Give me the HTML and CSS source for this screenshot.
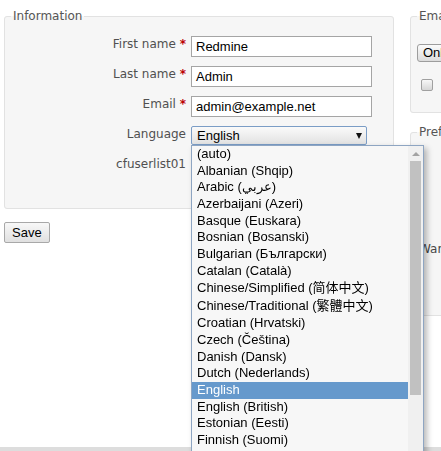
FILE: index.html
```html
<!DOCTYPE html>
<html lang="en">
<head>
<meta charset="utf-8">
<title>My account</title>
<link rel="stylesheet" href="styles.css">
</head>
<body>
<div class="page">
  <div class="col-left">
    <fieldset class="box info">
      <legend>Information</legend>
      <div class="row">
        <label class="lbl">First name <span class="req">*</span></label>
        <div class="field text">Redmine</div>
      </div>
      <div class="row">
        <label class="lbl">Last name <span class="req">*</span></label>
        <div class="field text">Admin</div>
      </div>
      <div class="row">
        <label class="lbl">Email <span class="req">*</span></label>
        <div class="field text">admin@example.net</div>
      </div>
      <div class="row">
        <label class="lbl">Language</label>
        <div class="field select"><span>English</span><span class="arrow"></span></div>
      </div>
      <div class="row row-cf">
        <label class="lbl">cfuserlist01</label>
        <div class="cf-space"></div>
      </div>
    </fieldset>
    <button class="save" type="button">Save</button>
  </div>

  <div class="col-right">
    <fieldset class="box mail">
      <legend>Email notifications</legend>
      <div class="mini-select">Only for things I watch or I'm involved in</div>
      <div class="check-row"><span class="checkbox"></span><span class="check-label">I don't want to be notified of changes that I make myself</span></div>
    </fieldset>
    <fieldset class="box pref">
      <legend>Preferences</legend>
      <div class="pref-space"></div>
      <div class="pref-line">Warn me when leaving a page with unsaved text</div>
    </fieldset>
  </div>
</div>

<div class="dropdown">
  <ul class="options">
    <li>(auto)</li>
    <li>Albanian (Shqip)</li>
    <li>Arabic (عربي)</li>
    <li>Azerbaijani (Azeri)</li>
    <li>Basque (Euskara)</li>
    <li>Bosnian (Bosanski)</li>
    <li>Bulgarian (Български)</li>
    <li>Catalan (Català)</li>
    <li class="cjk">Chinese/Simplified (简体中文)</li>
    <li class="cjk">Chinese/Traditional (繁體中文)</li>
    <li>Croatian (Hrvatski)</li>
    <li>Czech (Čeština)</li>
    <li>Danish (Dansk)</li>
    <li>Dutch (Nederlands)</li>
    <li class="selected">English</li>
    <li>English (British)</li>
    <li>Estonian (Eesti)</li>
    <li>Finnish (Suomi)</li>
    <li>French (Français)</li>
  </ul>
  <div class="scrollbar">
    <span class="up"></span>
    <span class="thumb"></span>
  </div>
</div>

<div class="hscroll"></div>
</body>
</html>
```

FILE: styles.css
```css
html, body {
  margin: 0;
  height: 100%;
  overflow: hidden;
  background: #fff;
}

body {
  font-family: "DejaVu Sans", Verdana, sans-serif;
  font-size: 12px;
  color: #333;
}

.page {
  display: flex;
  align-items: flex-start;
  gap: 16px;
  padding: 9px 0 0 4px;
  width: 800px;
}

.col-left {
  width: 390px;
  flex: none;
}

.col-right {
  width: 320px;
  flex: none;
}

.box {
  margin: 0;
  border: 1px solid #e2e2e2;
  border-radius: 3px;
  background: #f6f6f6;
  padding: 0 6px;
  min-width: 0;
}

.box legend {
  padding: 0 2px;
  color: #555;
  font-size: 12px;
  line-height: 14px;
}

/* Information */
.info {
  padding-top: 13px;
  padding-bottom: 10px;
}

.row {
  display: grid;
  grid-template-columns: 175px 181px;
  column-gap: 5px;
  align-items: start;
  margin-bottom: 9px;
}

.row:last-child {
  margin-bottom: 0;
}

.lbl {
  text-align: right;
  color: #505050;
  line-height: 14px;
  padding-top: 1px;
  white-space: nowrap;
}

.req {
  color: #bb0000;
  font-weight: bold;
}

.field {
  box-sizing: border-box;
  font-family: "Liberation Sans", Arial, sans-serif;
  font-size: 13px;
  color: #000;
  white-space: nowrap;
  overflow: hidden;
}

.text {
  height: 21px;
  line-height: 19px;
  border: 1px solid #a5a5a5;
  background: #fff;
  padding: 0 4px;
}

.select {
  width: 176px;
  height: 19px;
  line-height: 17px;
  border: 1px solid #7b9dc6;
  border-radius: 2px;
  background: linear-gradient(#fafafa, #e2e2e2);
  padding: 0 4px 0 5px;
  display: flex;
  align-items: center;
  justify-content: space-between;
}

.arrow {
  width: 0;
  height: 0;
  border-left: 3.5px solid transparent;
  border-right: 3.5px solid transparent;
  border-top: 6px solid #111;
  margin-top: 1px;
}

.row-cf .lbl {
  padding-top: 3px;
}

.cf-space {
  height: 44px;
}

.save {
  margin: 13px 0 0;
  height: 21px;
  padding: 0 7px;
  font-family: "Liberation Sans", Arial, sans-serif;
  font-size: 13px;
  color: #000;
  border: 1px solid #a8a8a8;
  border-radius: 2px;
  background: linear-gradient(#f8f8f8, #e0e0e0);
  line-height: 19px;
}

/* Right column */
.mail {
  padding-top: 21px;
  padding-bottom: 21px;
}

.mini-select {
  box-sizing: border-box;
  height: 18px;
  line-height: 16px;
  width: 320px;
  border: 1px solid #9d9d9d;
  border-radius: 3px;
  background: linear-gradient(#fbfbfb, #dcdcdc);
  font-family: "Liberation Sans", Arial, sans-serif;
  font-size: 13px;
  color: #000;
  padding: 0 5px;
  white-space: nowrap;
  overflow: hidden;
}

.check-row {
  display: flex;
  align-items: center;
  gap: 6px;
  margin-top: 17px;
  padding-left: 4px;
  height: 12px;
  white-space: nowrap;
}

.checkbox {
  box-sizing: border-box;
  width: 12px;
  height: 12px;
  border: 1px solid #a0a0a0;
  border-radius: 2px;
  background: linear-gradient(#f7f7f7, #d6d6d6);
  flex: none;
}

.check-label {
  margin-left: 40px;
  color: #333;
}

.pref {
  margin-top: 12px;
  padding-bottom: 59px;
}

.pref-space {
  height: 103px;
}

.pref-line {
  padding-left: 2px;
  line-height: 14px;
  color: #484848;
  white-space: nowrap;
}

/* Dropdown popup */
.dropdown {
  position: absolute;
  left: 191px;
  top: 145px;
  width: 233px;
  height: 330px;
  box-sizing: border-box;
  border: 1px solid #8ea5c2;
  background: #f7f7f7;
  display: flex;
  box-shadow: 3px 3px 6px rgba(0, 0, 0, 0.28);
  z-index: 10;
}

.options {
  list-style: none;
  margin: 0;
  padding: 0;
  width: 216px;
  flex: none;
  font-family: "Liberation Sans", Arial, "Noto Sans CJK SC", sans-serif;
  font-size: 13px;
  color: #000;
}

.options li {
  height: 16.67px;
  line-height: 16.67px;
  padding-left: 5px;
  white-space: nowrap;
  overflow: hidden;
}

.options li.cjk {
  height: 18px;
  line-height: 18px;
}

.options li.selected {
  background: #6699cc;
  color: #fff;
}

.scrollbar {
  width: 15px;
  flex: none;
  background: #f0f0f0;
  display: flex;
  flex-direction: column;
  align-items: center;
}

.up {
  width: 0;
  height: 0;
  margin-top: 6px;
  border-left: 4px solid transparent;
  border-right: 4px solid transparent;
  border-bottom: 4px solid #a3a3a3;
}

.thumb {
  margin-top: 5px;
  width: 11px;
  height: 234px;
  background: #c1c1c1;
}

.hscroll {
  position: fixed;
  left: 0;
  right: 0;
  bottom: 0;
  height: 4px;
  background: #dddddd;
}
```
